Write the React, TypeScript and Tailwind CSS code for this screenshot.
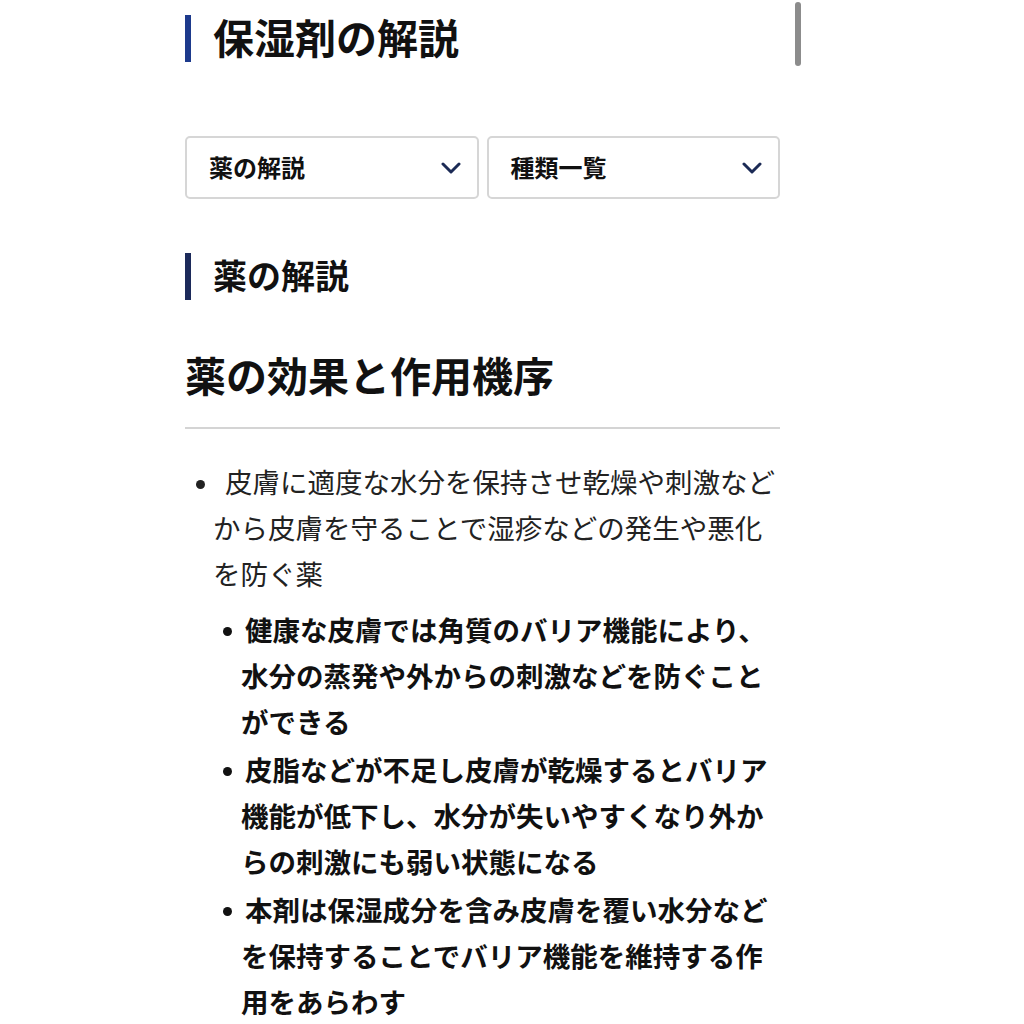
import React from 'react'

const font = { fontFamily: '"Noto Sans CJK JP", "Noto Sans", sans-serif' }

function Chevron() {
  return (
    <svg width="20" height="14" viewBox="0 0 20 14" fill="none">
      <polyline points="2,3 10,11 18,3" stroke="#1b2a55" strokeWidth="3" strokeLinecap="round" strokeLinejoin="round" />
    </svg>
  )
}

function Select({ label }: { label: string }) {
  return (
    <div className="h-[63px] flex items-center justify-between pl-[22px] pr-[16px] border-2 border-[#d6d6d6] rounded-[5px] bg-white">
      <span className="text-[24px] font-bold text-[#111] leading-none pb-[2px]">{label}</span>
      <Chevron />
    </div>
  )
}

const subItems = [
  '健康な皮膚では角質のバリア機能により、水分の蒸発や外からの刺激などを防ぐことができる',
  '皮脂などが不足し皮膚が乾燥するとバリア機能が低下し、水分が失いやすくなり外からの刺激にも弱い状態になる',
  '本剤は保湿成分を含み皮膚を覆い水分などを保持することでバリア機能を維持する作用をあらわす',
]

export default function App() {
  return (
    <div className="min-h-screen bg-white relative" style={font}>
      {/* scrollbar */}
      <div className="absolute left-[795px] top-[2px] w-[6px] h-[64px] rounded-full bg-[#8c8c8c]" />

      <div className="ml-[185px] w-[595px] pt-[15px]">
        <h1 className="border-l-[6px] border-[#1d3a8c] pl-[22px] h-[47px] flex items-center text-[41px] font-bold text-[#111] leading-none">
          <span className="pb-[4px]">保湿剤の解説</span>
        </h1>

        <div className="grid grid-cols-2 gap-[8px] mt-[74px]">
          <Select label="薬の解説" />
          <Select label="種類一覧" />
        </div>

        <h2 className="mt-[54px] border-l-[6px] border-[#1c2a5a] pl-[22px] h-[47px] flex items-center text-[34px] font-bold text-[#111] leading-none">
          <span className="pb-[3px]">薬の解説</span>
        </h2>

        <h3 className="mt-[50px] pb-[29px] border-b-2 border-[#d4d4d4] text-[41px] font-bold text-[#111] leading-[48px]">
          薬の効果と作用機序
        </h3>

        <div className="mt-[29px] flex">
          <div className="w-[28px] shrink-0 h-[46px] flex items-center">
            <span className="ml-[11px] mt-[6px] w-[9px] h-[9px] rounded-full bg-[#222]" />
          </div>
          <div className="flex-1">
            <p className="text-[27.5px] leading-[46px] text-[#222] font-normal indent-[12px]">
              皮膚に適度な水分を保持させ乾燥や刺激などから皮膚を守ることで湿疹などの発生や悪化を防ぐ薬
            </p>
            <ul className="mt-[10px] flex flex-col gap-[2px]">
              {subItems.map((t) => (
                <li key={t} className="flex">
                  <div className="w-[28px] shrink-0 h-[46px] flex items-center">
                    <span className="ml-[10px] mt-[5px] w-[9px] h-[9px] rounded-full bg-[#111]" />
                  </div>
                  <p className="flex-1 text-[27.5px] leading-[46px] font-bold text-[#111] indent-[4px]">{t}</p>
                </li>
              ))}
            </ul>
          </div>
        </div>
      </div>
    </div>
  )
}
